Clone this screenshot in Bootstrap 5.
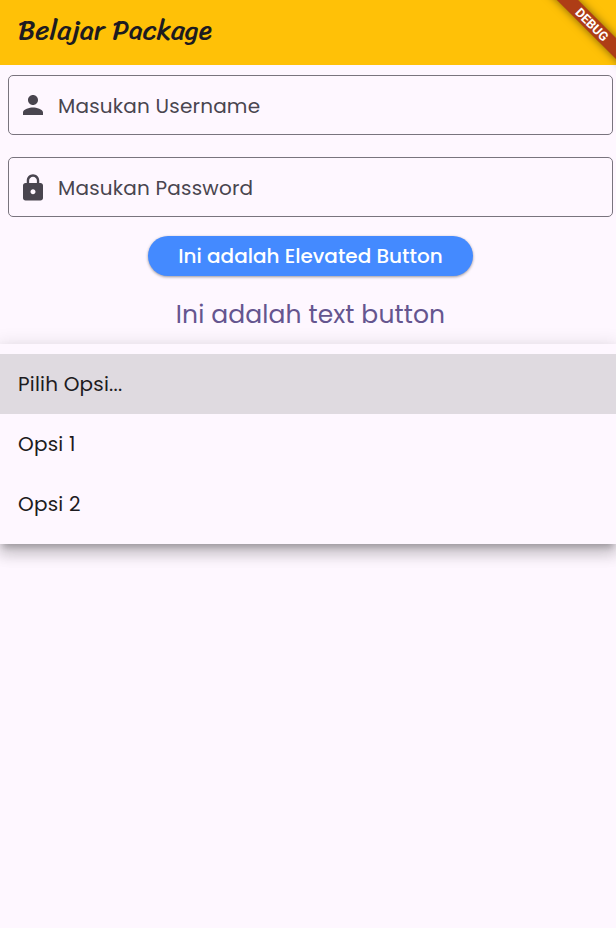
<!DOCTYPE html>
<html lang="id">
<head>
<meta charset="utf-8">
<meta name="viewport" content="width=device-width, initial-scale=1">
<title>Belajar Package</title>
<link href="https://cdn.jsdelivr.net/npm/bootstrap@5.3.0/dist/css/bootstrap.min.css" rel="stylesheet">
<style>
body{background:#fef7ff;color:#1d1b20;font-family:Poppins,Inter,"Liberation Sans",sans-serif;font-feature-settings:"cv11";font-size:20px;height:928px}
.app-bar{height:65px;background:#ffc107;padding:0 18px 6px}
.app-title{font-family:Sriracha,Courgette,Lato,"Liberation Sans",sans-serif;font-weight:400;font-size:27.5px;line-height:1}
.debug-ribbon{width:110px;height:15px;left:537px;top:17px;transform:rotate(45deg);background:#ae3d16;box-shadow:0 0 8px rgba(0,0,0,.5);color:#fff;font:700 12.75px/15px Roboto,sans-serif}
.form-area{padding:10px 3px 0 8px}
.field-box{height:60px;border:1px solid #79747e;border-radius:5px;color:#49454f;padding-left:9px;margin-bottom:22px}
.field-box svg{width:30px;height:30px;margin-right:10px}
.field-box svg.lock-icon{margin-top:1px}
.user-label{letter-spacing:.2px;padding-top:2px}
.pill{width:325px;height:40px;margin-left:5px;background:#448aff;color:#fff;font-weight:500;font-size:20px;line-height:1;box-shadow:0 1px 3px rgba(0,0,0,.4);border:0;padding:0}
.button-stack{margin-top:-3px}
.link-text{height:68px;padding-top:9px;color:#65558f;font-size:25px;letter-spacing:.11px;margin-left:5px}
.option-menu{height:200px;padding:10px 0;background:#fef7ff;box-shadow:0 6px 6px -3px rgba(0,0,0,.2),0 10px 13px 1px rgba(0,0,0,.14),0 4px 18px 3px rgba(0,0,0,.12)}
.option-row{height:60px;padding-left:18px;letter-spacing:.2px}
.option-row.chosen{background:#dfdae0}
</style>
</head>
<body class="position-relative overflow-hidden">
<header class="app-bar d-flex align-items-center">
  <h1 class="app-title m-0">Belajar Package</h1>
</header>
<div class="debug-ribbon position-absolute text-center">DEBUG</div>
<main>
  <div class="form-area d-flex flex-column">
    <div class="field-box d-flex align-items-center">
      <svg viewBox="0 0 24 24" fill="currentColor" aria-hidden="true"><path d="M12 12c2.21 0 4-1.79 4-4s-1.790-4-4-4-4 1.790-4 4 1.790 4 4 4zm0 2c-2.670 0-8 1.340-8 4v2h16v-2c0-2.660-5.330-4-8-4z"/></svg>
      <span class="user-label">Masukan Username</span>
    </div>
    <div class="field-box d-flex align-items-center">
      <svg class="lock-icon" viewBox="0 0 24 24" fill="currentColor" aria-hidden="true"><path d="M18 8h-1V6c0-2.760-2.240-5-5-5S7 3.240 7 6v2H6c-1.100 0-2 .9-2 2v10c0 1.100.9 2 2 2h12c1.100 0 2-.9 2-2V10c0-1.100-.9-2-2-2zm-6 9c-1.100 0-2-.9-2-2s.9-2 2-2 2 .9 2 2-.9 2-2 2zm3.100-9H8.900V6c0-1.710 1.390-3.100 3.100-3.100s3.100 1.390 3.100 3.100z"/></svg>
      <span class="user-label">Masukan Password</span>
    </div>
  </div>
  <div class="button-stack d-flex flex-column align-items-center">
    <button class="pill btn rounded-pill" type="button">Ini adalah Elevated Button</button>
    <div class="link-text d-flex align-items-center">Ini adalah text button</div>
  </div>
  <div class="option-menu position-relative">
    <div class="option-row chosen d-flex align-items-center">Pilih Opsi...</div>
    <div class="option-row d-flex align-items-center">Opsi 1</div>
    <div class="option-row d-flex align-items-center">Opsi 2</div>
  </div>
</main>
<script src="https://cdn.jsdelivr.net/npm/bootstrap@5.3.0/dist/js/bootstrap.bundle.min.js"></script>
</body>
</html>
